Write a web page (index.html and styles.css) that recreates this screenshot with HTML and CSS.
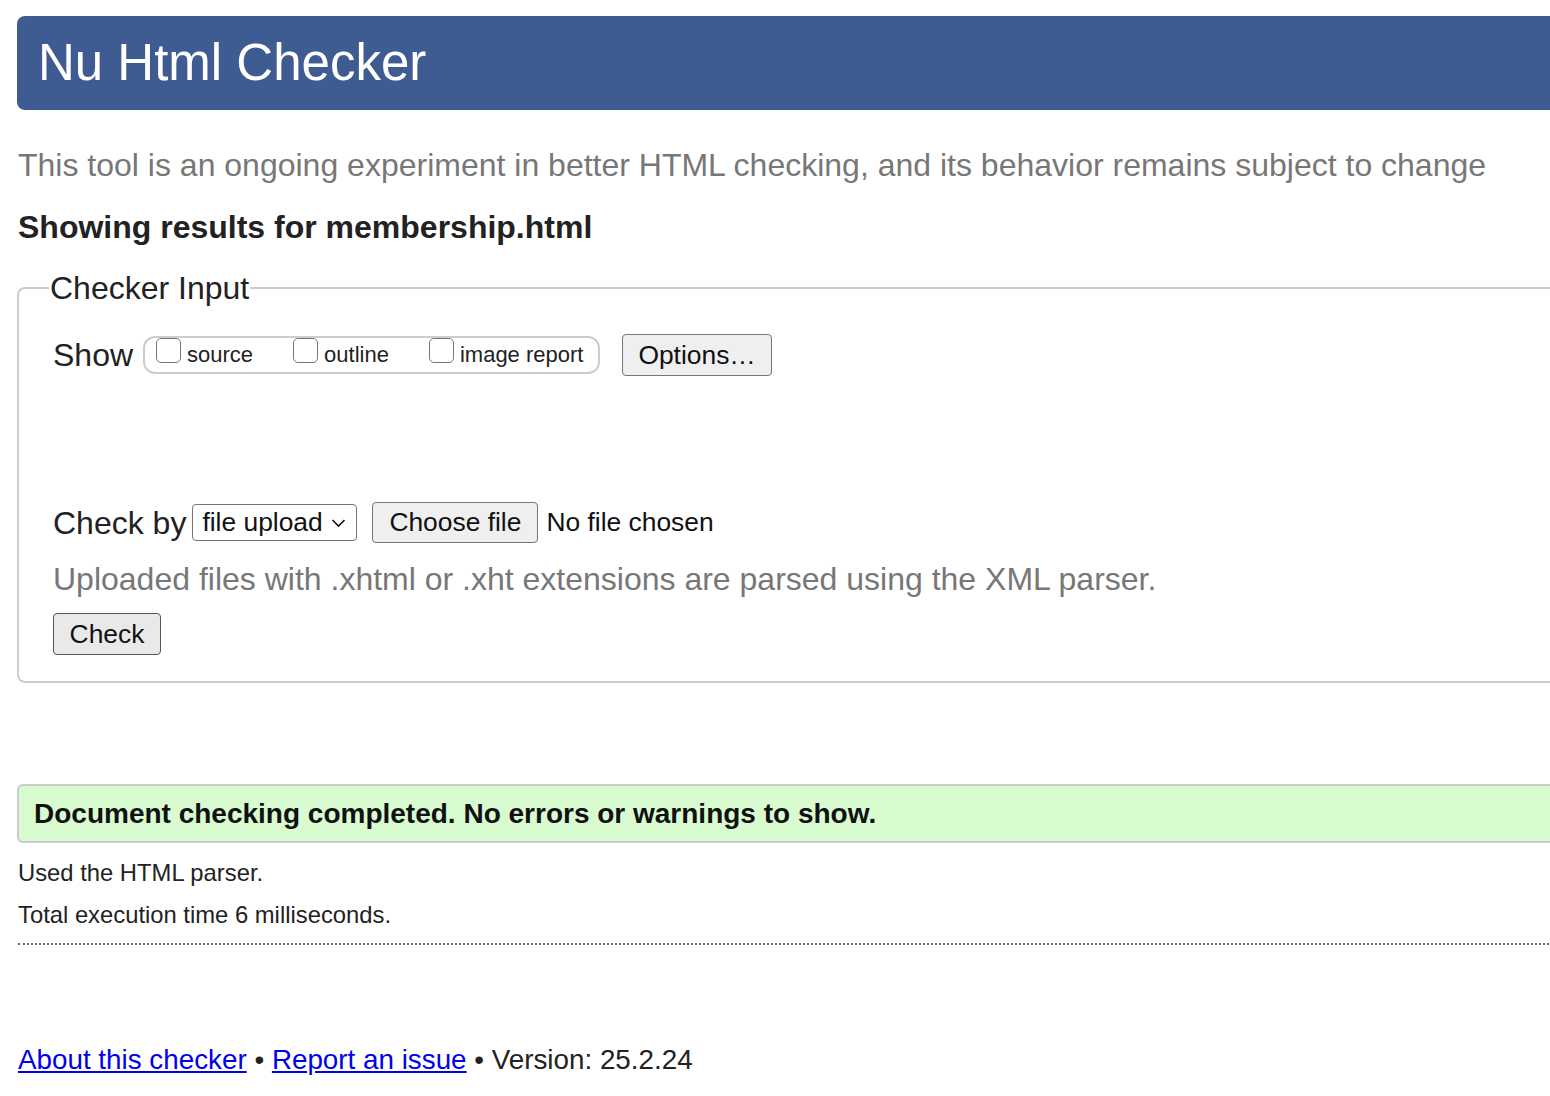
FILE: index.html
```html
<!DOCTYPE html>
<html lang="en">
<head>
<meta charset="utf-8">
<title>Showing results for membership.html - Nu Html Checker</title>
<link rel="stylesheet" href="styles.css">
</head>
<body>
<div class="page">
  <h1 class="banner">Nu Html Checker</h1>
  <p class="intro">This tool is an ongoing experiment in better HTML checking, and its behavior remains subject to change</p>
  <h2 class="results-title">Showing results for membership.html</h2>

  <fieldset class="checker">
    <legend class="checker-legend">Checker Input</legend>
    <div class="row show-row">
      <span class="row-label">Show</span>
      <span class="show-group">
        <label class="opt"><span class="box"></span>source</label>
        <label class="opt"><span class="box"></span>outline</label>
        <label class="opt"><span class="box"></span>image report</label>
      </span>
      <button class="btn btn-options" type="button">Options…</button>
    </div>

    <div class="row check-row">
      <span class="row-label">Check by</span>
      <span class="select">file upload<svg class="chev" width="15" height="10" viewBox="0 0 15 10"><path d="M1.5 2 L7.5 8 L13.5 2" fill="none" stroke="#111" stroke-width="1.6"/></svg></span>
      <button class="btn btn-file" type="button">Choose file</button>
      <span class="no-file">No file chosen</span>
    </div>

    <p class="hint">Uploaded files with .xhtml or .xht extensions are parsed using the XML parser.</p>
    <button class="btn btn-check" type="button">Check</button>
  </fieldset>

  <p class="success">Document checking completed. No errors or warnings to show.</p>
  <p class="details">Used the HTML parser.</p>
  <p class="details details-last">Total execution time 6 milliseconds.</p>

  <p class="footer"><a href="#">About this checker</a> • <a href="#">Report an issue</a> • Version: 25.2.24</p>
</div>
</body>
</html>
```

FILE: styles.css
```css
html {
  overflow: hidden;
  background: #fff;
}
body {
  margin: 0;
  font-family: "Liberation Sans", Arial, Helvetica, sans-serif;
  color: #222;
}
.page {
  width: 1620px;
  padding: 16px 0 0 17px;
}
.banner {
  margin: 0;
  height: 94px;
  line-height: 94px;
  background: #3e5c91;
  color: #fff;
  font-size: 51px;
  font-weight: normal;
  padding-left: 21px;
  border-radius: 8px 0 0 8px;
}
.intro {
  margin: 35px 0 0 1px;
  font-size: 32px;
  line-height: 40px;
  color: #777;
}
.results-title {
  margin: 22px 0 0 1px;
  font-size: 32px;
  line-height: 40px;
  font-weight: bold;
  color: #222;
}
.checker {
  margin: 23px 0 0 0;
  border: 2px solid #ccc;
  border-radius: 8px;
  padding: 0 0 26px 34px;
}
.checker-legend {
  font-size: 32px;
  line-height: 36px;
  padding: 0 1px;
  margin-left: -4px;
  color: #222;
}
.row {
  display: flex;
  align-items: center;
}
.row-label {
  font-size: 32px;
  line-height: 42px;
}
.show-row {
  margin-top: 28px;
  height: 42px;
}
.show-group {
  display: flex;
  align-items: center;
  height: 38px;
  box-sizing: border-box;
  width: 457px;
  margin-left: 10px;
  border: 2px solid #ccc;
  border-radius: 12px;
  padding-left: 11px;
  font-size: 22px;
}
.opt {
  display: flex;
  align-items: center;
  margin-right: 40px;
}
.opt:last-child {
  margin-right: 0;
}
.box {
  display: inline-block;
  width: 25px;
  height: 25px;
  box-sizing: border-box;
  border: 1.5px solid #767676;
  border-radius: 5px;
  margin-right: 6px;
  position: relative;
  top: -5px;
  background: #fff;
}
.btn {
  font-family: "Liberation Sans", Arial, Helvetica, sans-serif;
  font-size: 26.4px;
  color: #111;
  background: #efefef;
  border: 1.5px solid #767676;
  border-radius: 4px;
  box-sizing: border-box;
  padding: 0;
}
.btn-options {
  width: 150px;
  height: 42px;
  margin-left: 22px;
}
.check-row {
  margin-top: 126px;
  height: 41px;
}
.select {
  display: inline-flex;
  align-items: center;
  box-sizing: border-box;
  height: 37px;
  width: 165px;
  margin-left: 6px;
  padding-left: 9px;
  border: 1.5px solid #767676;
  border-radius: 4px;
  background: #fff;
  font-size: 26.4px;
  color: #111;
}
.chev {
  margin-left: 8px;
}
.btn-file {
  width: 166px;
  height: 41px;
  margin-left: 15px;
}
.no-file {
  font-size: 26.4px;
  margin-left: 8px;
  color: #111;
}
.hint {
  margin: 16px 0 0 0;
  font-size: 32px;
  line-height: 40px;
  color: #777;
}
.btn-check {
  display: block;
  width: 108px;
  height: 42px;
  margin-top: 14px;
  background: #e9e9e9;
  border-color: #555;
}
.success {
  margin: 101px 0 0 0;
  height: 59px;
  box-sizing: border-box;
  line-height: 55px;
  padding-left: 15px;
  background: #d8fbd0;
  border: 2px solid #ccc;
  border-right: none;
  border-radius: 6px 0 0 6px;
  font-size: 28px;
  font-weight: bold;
  color: #111;
}
.details {
  margin: 14px 0 0 1px;
  font-size: 23.8px;
  line-height: 32px;
  color: #222;
}
.details + .details {
  margin-top: 10px;
}
.details-last {
  padding-bottom: 12px;
  border-bottom: 2px dotted #666;
}
.footer {
  margin: 97px 0 0 1px;
  font-size: 27.8px;
  line-height: 36px;
  color: #222;
}
.footer a {
  color: #0000ee;
  text-decoration: underline;
}
```
